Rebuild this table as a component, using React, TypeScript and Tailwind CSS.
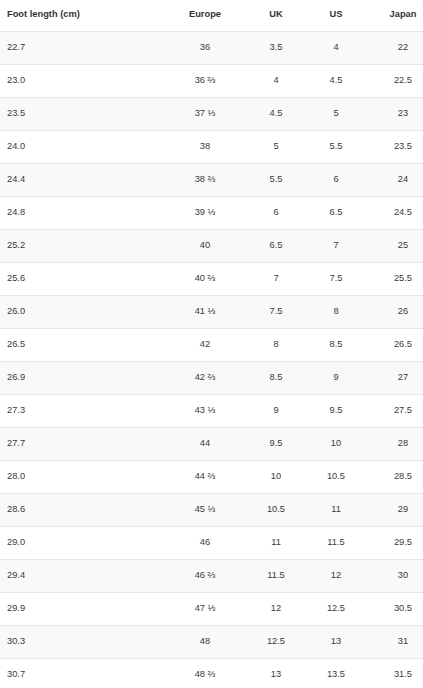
import React from "react";

const ROWS: [string, string, string, string, string][] = [
  ["22.7", "36", "3.5", "4", "22"],
  ["23.0", "36 ⅔", "4", "4.5", "22.5"],
  ["23.5", "37 ⅓", "4.5", "5", "23"],
  ["24.0", "38", "5", "5.5", "23.5"],
  ["24.4", "38 ⅔", "5.5", "6", "24"],
  ["24.8", "39 ⅓", "6", "6.5", "24.5"],
  ["25.2", "40", "6.5", "7", "25"],
  ["25.6", "40 ⅔", "7", "7.5", "25.5"],
  ["26.0", "41 ⅓", "7.5", "8", "26"],
  ["26.5", "42", "8", "8.5", "26.5"],
  ["26.9", "42 ⅔", "8.5", "9", "27"],
  ["27.3", "43 ⅓", "9", "9.5", "27.5"],
  ["27.7", "44", "9.5", "10", "28"],
  ["28.0", "44 ⅔", "10", "10.5", "28.5"],
  ["28.6", "45 ⅓", "10.5", "11", "29"],
  ["29.0", "46", "11", "11.5", "29.5"],
  ["29.4", "46 ⅔", "11.5", "12", "30"],
  ["29.9", "47 ⅓", "12", "12.5", "30.5"],
  ["30.3", "48", "12.5", "13", "31"],
  ["30.7", "48 ⅔", "13", "13.5", "31.5"],
];

const cols = "grid grid-cols-[170px_70px_72px_48px_63px] items-center";

export default function App() {
  return (
    <div className="w-[423px] bg-white font-['Liberation_Sans',Arial,sans-serif] text-[9.3px]">
      {/* HEADER */}
      <div className={`${cols} h-[32px] border-b border-[#e6e6e6] pb-px font-bold text-[#333]`}>
        <div className="pl-[7px]">Foot length (cm)</div>
        <div className="text-center">Europe</div>
        <div className="text-center">UK</div>
        <div className="text-center">US</div>
        <div className="pl-[23px] text-center">Japan</div>
      </div>

      {/* ROWS */}
      {ROWS.map((r, i) => (
        <div
          key={r[0]}
          className={`${cols} h-[33px] border-b border-[#e6e6e6] text-[#3a3a3a] ${
            i % 2 === 0 ? "bg-[#f9f9f9]" : "bg-white"
          }`}
        >
          <div className="pl-[7px]">{r[0]}</div>
          <div className="text-center">{r[1]}</div>
          <div className="text-center">{r[2]}</div>
          <div className="text-center">{r[3]}</div>
          <div className="pl-[23px] text-center">{r[4]}</div>
        </div>
      ))}
    </div>
  );
}
